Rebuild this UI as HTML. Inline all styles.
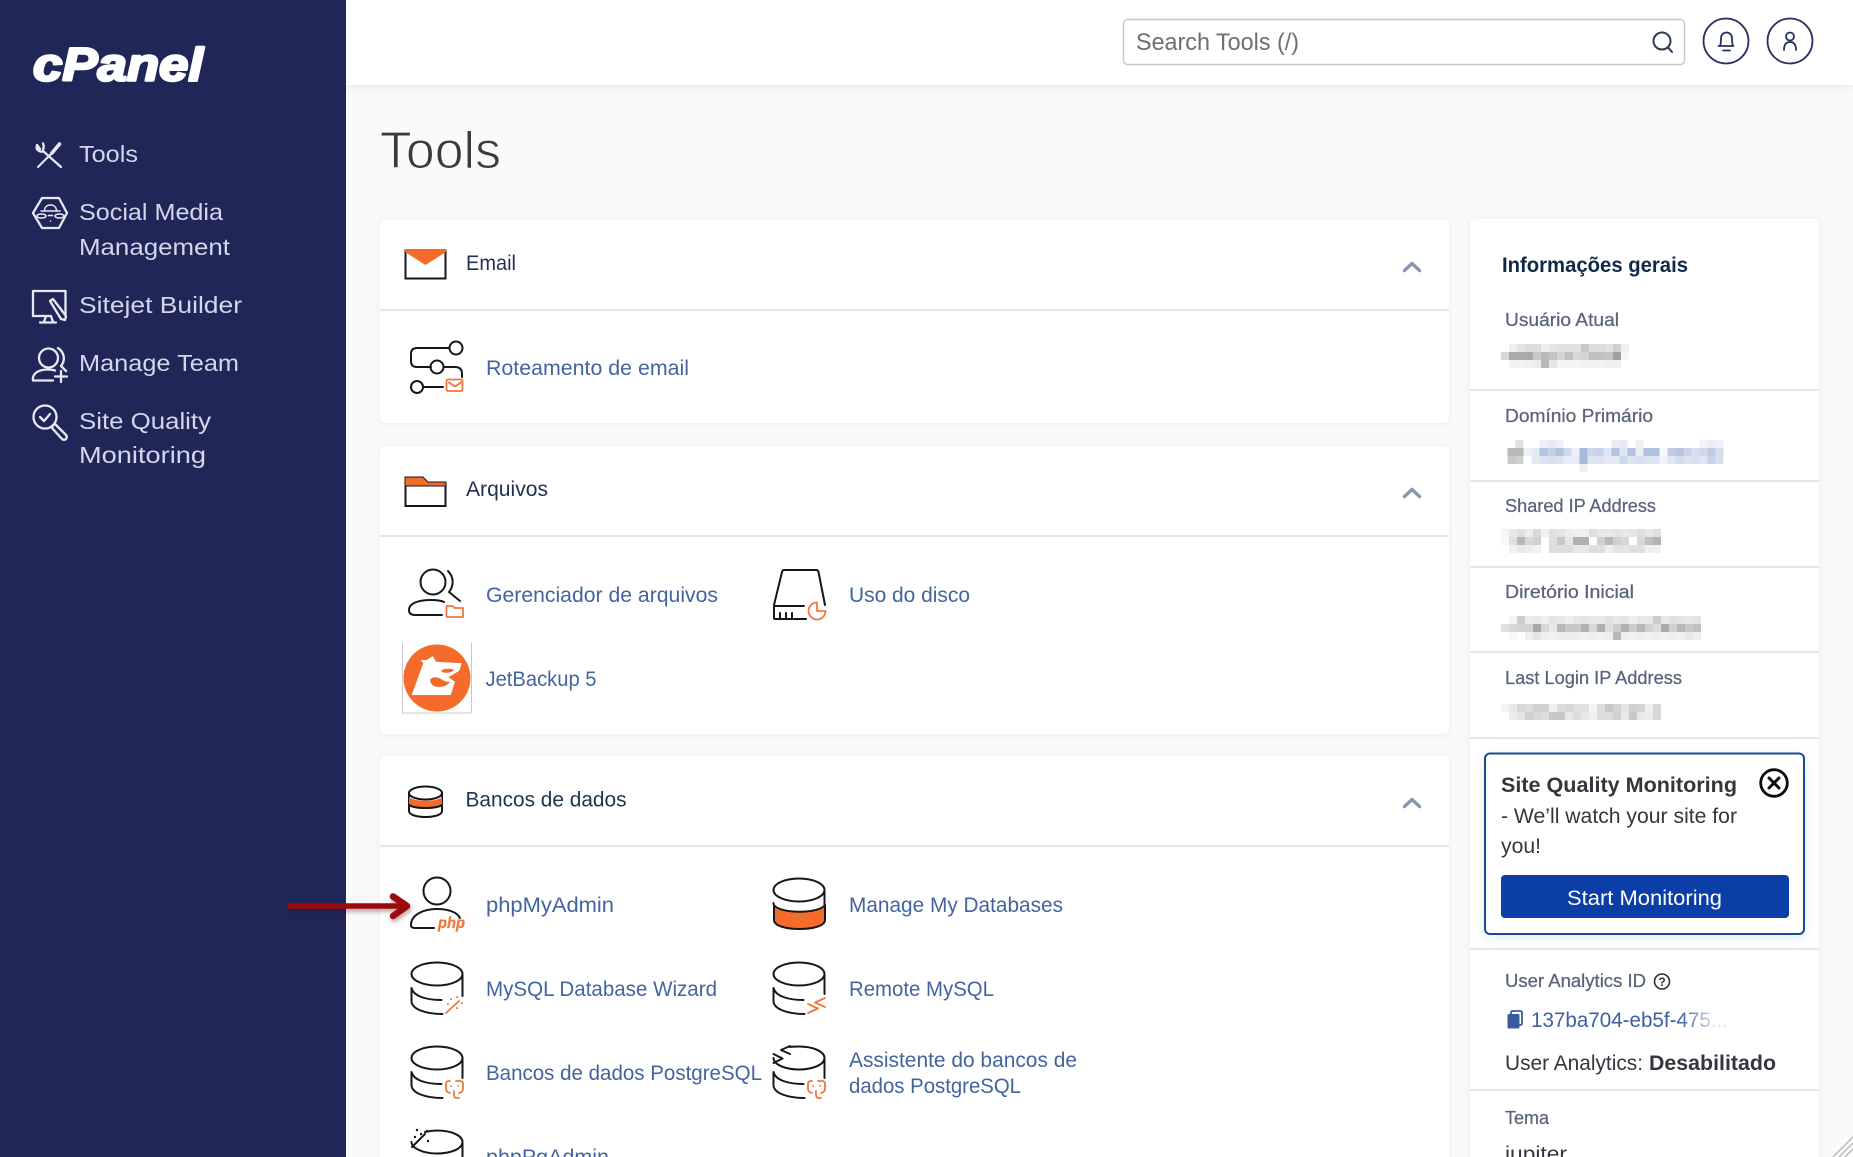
<!DOCTYPE html>
<html lang="pt"><head><meta charset="utf-8"><title>cPanel - Tools</title>
<style>
html,body{margin:0;padding:0;width:1853px;height:1157px;overflow:hidden;background:#fafafa}
svg{display:block}
text{font-family:"Liberation Sans",sans-serif;white-space:pre}
.nav{font-size:23.5px;fill:#d2d7ea}
.hd{font-size:21px;fill:#1f3350}
.lk{font-size:21px;fill:#44649f}
.lb{font-size:18px;fill:#59637a;stroke:#59637a;stroke-width:.25px}
.tx{font-size:21px;fill:#33373d}
.b{font-weight:700}
.i{fill:none;stroke:#e6e9f4;stroke-width:2.3;stroke-linecap:round;stroke-linejoin:round}
.k{fill:none;stroke:#15171c;stroke-width:2;stroke-linecap:round;stroke-linejoin:round}
.o{fill:none;stroke:#f0783c;stroke-width:1.8;stroke-linecap:round;stroke-linejoin:round}
.ch{fill:none;stroke:#8c96b0;stroke-width:3.5;stroke-linecap:round;stroke-linejoin:round}
.dv{fill:#e6e6ea}
.p rect{width:8px;height:8px}
.card{fill:#fff;filter:drop-shadow(0 1px 3px rgba(30,30,60,.07))}
</style></head><body>
<svg width="1853" height="1157" viewBox="0 0 1853 1157" xmlns="http://www.w3.org/2000/svg">
<defs><linearGradient id="fade" gradientUnits="userSpaceOnUse" x1="1680" y1="0" x2="1715" y2="0"><stop offset="0" stop-color="#3f60a0"/><stop offset="1" stop-color="#dfe5f0"/></linearGradient></defs>
<rect width="1853" height="1157" fill="#fafafa"/>

<!-- top bar -->
<rect x="346" y="0" width="1507" height="85" fill="#fff" style="filter:drop-shadow(0 2px 4px rgba(30,30,60,.08))"/>
<rect x="1123.500" y="19.500" width="561" height="45" rx="4" fill="#fff" stroke="#c6c8d2" stroke-width="1.500"/>
<text x="1136" y="50" font-size="24" fill="#6c6f75" textLength="163" lengthAdjust="spacingAndGlyphs">Search Tools (/)</text>
<g fill="none" stroke="#2a3a52" stroke-width="2" stroke-linecap="round"><circle cx="1662" cy="41" r="8.500"/><path d="M1668 47.500l4 4.500"/></g>
<g fill="none" stroke="#27315f" stroke-width="1.800" stroke-linecap="round" stroke-linejoin="round">
<circle cx="1726" cy="41" r="22.500"/><circle cx="1790" cy="41" r="22.500"/>
<path d="M1720 46c1-2 1-4 1-8a5.500 5.500 0 0 1 11 0c0 4 0 6 1 8zM1718.500 46h15M1723 50.500h7"/>
<circle cx="1790" cy="36.500" r="4"/><path d="M1784 50c0-6 2.500-8 6-8s6 2 6 8"/>
</g>

<!-- heading -->
<text x="380" y="168" font-size="52" fill="#3a3a3e" stroke="#fafafa" stroke-width="1.100" textLength="121" lengthAdjust="spacingAndGlyphs">Tools</text>

<!-- email card -->
<rect class="card" x="380" y="220" width="1069" height="203" rx="5"/>
<rect class="dv" x="380" y="309" width="1069" height="2"/>
<path d="M405.500 250.500h40v28h-40z" fill="#fff" stroke="#15171c" stroke-width="2"/>
<path d="M405 250h41v2l-20.500 13-20.500-13z" fill="#f36c2c"/>
<text class="hd" x="466" y="270" textLength="50" lengthAdjust="spacingAndGlyphs">Email</text>
<path class="ch" d="M1404.500 270.500l7.500-7 7.500 7"/>
<g class="k"><circle cx="456" cy="348" r="6.500"/><path d="M449 348h-32q-6 0-6 6v7q0 6 6 6h14"/><circle cx="437" cy="367" r="6.500"/><path d="M444 367h11q7 0 7 7v3"/><circle cx="417" cy="387" r="6"/><path d="M423 387h20"/></g>
<g class="o"><rect x="446.500" y="379.500" width="16" height="11.500" rx="1.500"/><path d="M449 382.500l6 4 6-4"/></g>
<text class="lk" x="486" y="375" textLength="203" lengthAdjust="spacingAndGlyphs">Roteamento de email</text>

<!-- files card -->
<rect class="card" x="380" y="446" width="1069" height="288" rx="5"/>
<rect class="dv" x="380" y="535" width="1069" height="2"/>
<path d="M405.500 484h40v22h-40z" fill="#fff" stroke="#15171c" stroke-width="2"/>
<path d="M405 477h18l5 5h18v4h-41z" fill="#f36c2c" stroke="#15171c" stroke-width="1"/>
<text class="hd" x="466" y="496" textLength="82" lengthAdjust="spacingAndGlyphs">Arquivos</text>
<path class="ch" d="M1404.500 496.500l7.500-7 7.500 7"/>
<g class="k" stroke-width="1.800"><circle cx="433" cy="582" r="12.500"/><path d="M442 615h-27q-6 0-6-5c0-7 10-10 22-10q9 0 13 2M448 571c6 6 6 15 1 21l11 9"/></g>
<g class="o"><path d="M446.500 606h6l2 2h8.500v9h-16.500z"/></g>
<text class="lk" x="486" y="602" textLength="232" lengthAdjust="spacingAndGlyphs">Gerenciador de arquivos</text>
<g class="k"><path d="M774 605l8-33q.500-2 2-2h32q2 0 2.500 2l6.500 33"/><path d="M804 606h-30v12q0 1 1 1h31M780 613v5M786 613v5M792 613v5"/></g>
<g class="o"><path d="M817 602.500a8.500 8.500 0 1 0 8.500 8.500h-8.500z"/></g>
<text class="lk" x="849" y="602" textLength="121" lengthAdjust="spacingAndGlyphs">Uso do disco</text>
<path d="M402.500 643v70h69v-70" fill="#fff" stroke="#c8c8c8"/>
<circle cx="437" cy="678" r="33.500" fill="#f46b2c"/>
<path d="M411.700 695l11.600-31.700-2.600-3.300h6l6-4 3.300 5.700 25.700 1.600-2.400 7.400-11 6.600 6.700 4.400-4.300 13.300z" fill="#fff"/>
<path d="M441 671c2-3 10-3 13-1-2 3-10 4-13 1z" fill="#f46b2c"/>
<path d="M430 680c2-4 8-3 11-1 3 2 6 3 9 3-4 6-19 8-20-2z" fill="#f46b2c"/>
<text class="lk" x="485.500" y="686" textLength="111" lengthAdjust="spacingAndGlyphs">JetBackup 5</text>

<!-- db card -->
<rect class="card" x="380" y="756" width="1069" height="420" rx="5"/>
<rect class="dv" x="380" y="845" width="1069" height="2"/>
<path d="M409 793v18c0 8 33 8 33 0v-18z" fill="#fff" stroke="#15171c" stroke-width="2"/>
<ellipse cx="425.500" cy="793" rx="16.500" ry="6.500" fill="#fff" stroke="#15171c" stroke-width="2"/>
<path d="M409 797c5 5 28 5 33 0v8c-6 4-27 4-33 0z" fill="#f36c2c"/>
<path class="k" d="M409 805c6 4 27 4 33 0" stroke-width="1.500"/>
<text class="hd" x="465.500" y="806.500" textLength="161" lengthAdjust="spacingAndGlyphs">Bancos de dados</text>
<path class="ch" d="M1404.500 806.500l7.500-7 7.500 7"/>

<!-- phpMyAdmin -->
<g class="k" stroke-width="1.800"><circle cx="437" cy="891" r="13.500"/><path d="M434 928h-19q-4 0-4-3c0-10 12-16 26-16 11 0 20 3 23 9"/></g>
<text x="438" y="928" font-size="15.500" font-weight="700" font-style="italic" fill="#f0783c" stroke="#f0783c" stroke-width=".3" textLength="27" lengthAdjust="spacingAndGlyphs">php</text>
<text class="lk" x="486" y="912" textLength="128" lengthAdjust="spacingAndGlyphs">phpMyAdmin</text>
<!-- manage -->
<path d="M774 905v15c0 12 51 12 51 0v-15c-6 9-45 9-51 0z" fill="#f36c2c" stroke="#15171c" stroke-width="2" stroke-linejoin="round"/>
<g class="k"><ellipse cx="799" cy="890" rx="25.500" ry="11.500"/><path d="M824.500 890v16M773.500 890v0M773.500 904v-1"/></g>
<text class="lk" x="849" y="912" textLength="214" lengthAdjust="spacingAndGlyphs">Manage My Databases</text>
<!-- wizard -->
<g class="k"><ellipse cx="437" cy="974" rx="25.500" ry="11.500"/><path d="M462.500 974v22M411.500 988v13c0 8 14 13 31 13M411.500 988c2 8 14 12 30 12"/></g>
<g class="o"><path d="M446 1013l13-12"/><path d="M451 999v.1M457 997v.1M462 1003v.1M457 1008v.1M448 1004v.1" stroke-width="2"/></g>
<text class="lk" x="486" y="996" textLength="231" lengthAdjust="spacingAndGlyphs">MySQL Database Wizard</text>
<!-- remote -->
<g class="k"><ellipse cx="799" cy="974" rx="25.500" ry="11.500"/><path d="M824.500 974v20M773.500 988v13c0 8 14 13 31 13M773.500 988c2 8 14 12 30 12"/></g>
<g class="o"><path d="M808 1004l10 4.500-10 4.500M825 998l-10 4.500 10 4.500"/></g>
<text class="lk" x="849" y="996" textLength="145" lengthAdjust="spacingAndGlyphs">Remote MySQL</text>
<!-- postgres -->
<g class="k"><ellipse cx="437" cy="1058" rx="25.500" ry="11.500"/><path d="M462.500 1058v20M411.500 1072v13c0 8 14 13 31 13M411.500 1072c2 8 14 12 30 12"/></g>
<g class="o"><path d="M450 1081h-1q-3 0-3 3v5q0 3 4 4M456 1081h4q3 0 3 3v5q0 3-4 4M454 1091v4q0 3 3 3h2M451 1086v.1M458 1086v.1"/></g>
<text class="lk" x="486" y="1080" textLength="276" lengthAdjust="spacingAndGlyphs">Bancos de dados PostgreSQL</text>
<!-- assistente -->
<g class="k"><path d="M790 1047c3-.500 6-.500 9-.500 14 0 25.500 5 25.500 11.500s-11.500 11.500-25.500 11.500-25.500-5-25.500-11.500M824.500 1058v20M773.500 1072v13c0 8 14 13 31 13M773.500 1072c2 8 14 12 30 12M790 1046l-9 4 9 4M773.500 1054l9 4.500-9 4.500"/></g>
<g class="o"><path d="M812 1081h-1q-3 0-3 3v5q0 3 4 4M818 1081h4q3 0 3 3v5q0 3-4 4M816 1091v4q0 3 3 3h2M813 1086v.1M820 1086v.1"/></g>
<text class="lk" x="849" y="1067" textLength="228" lengthAdjust="spacingAndGlyphs">Assistente do bancos de</text>
<text class="lk" x="849" y="1093" textLength="172" lengthAdjust="spacingAndGlyphs">dados PostgreSQL</text>
<!-- phppgadmin -->
<g class="k"><path d="M425 1132c4-1 8-1.500 12-1.500 14 0 25.500 5 25.500 11.500v15"/><path d="M411.500 1142c0 6 11 11.500 25.500 11.500s25.500-5 25.500-11.500"/><path d="M412 1147l13-13" /><path d="M417 1130v.1M421 1134v.1M427 1131v.1M415 1137v.1M428 1141v.1" stroke-width="2.400"/></g>
<text class="lk" x="486" y="1164" textLength="123" lengthAdjust="spacingAndGlyphs">phpPgAdmin</text>

<!-- info panel -->
<rect class="card" x="1470" y="219" width="349" height="960" rx="4"/>
<rect class="dv" x="1470" y="389" width="349" height="2"/>
<rect class="dv" x="1470" y="480" width="349" height="2"/>
<rect class="dv" x="1470" y="566" width="349" height="2"/>
<rect class="dv" x="1470" y="651" width="349" height="2"/>
<rect class="dv" x="1470" y="737" width="349" height="2"/>
<rect class="dv" x="1470" y="948" width="349" height="2"/>
<rect class="dv" x="1470" y="1089" width="349" height="2"/>
<text x="1502" y="272" font-size="21" font-weight="700" fill="#10294a" textLength="186" lengthAdjust="spacingAndGlyphs">Informações gerais</text>
<text class="lb" x="1505" y="326" textLength="114" lengthAdjust="spacingAndGlyphs">Usuário Atual</text>
<text class="lb" x="1505" y="422" textLength="148" lengthAdjust="spacingAndGlyphs">Domínio Primário</text>
<text class="lb" x="1505" y="512" textLength="151" lengthAdjust="spacingAndGlyphs">Shared IP Address</text>
<text class="lb" x="1505" y="598" textLength="129" lengthAdjust="spacingAndGlyphs">Diretório Inicial</text>
<text class="lb" x="1505" y="684" textLength="177" lengthAdjust="spacingAndGlyphs">Last Login IP Address</text>

<g class="p">
<g transform="translate(1501,344)"><rect x="8" fill="#eee"/><rect x="16" fill="#e4e4e4"/><rect x="24" fill="#ddd"/><rect x="32" fill="#ddd"/><rect x="40" fill="#eee"/><rect x="48" fill="#e6e6e6"/><rect x="56" fill="#e2e2e2"/><rect x="64" fill="#e2e2e2"/><rect x="72" fill="#e2e2e2"/><rect x="80" fill="#c8c8c8"/><rect x="88" fill="#ddd"/><rect x="96" fill="#ddd"/><rect x="104" fill="#e2e2e2"/><rect x="112" fill="#d0d0d0"/><rect x="120" fill="#f0f0f0"/></g>
<g transform="translate(1501,352)"><rect x="0" fill="#d8d8d8"/><rect x="8" fill="#aaa"/><rect x="16" fill="#aaa"/><rect x="24" fill="#aaa"/><rect x="32" fill="#c8c8c8"/><rect x="40" fill="#b8b8b8"/><rect x="48" fill="#c4c4c4"/><rect x="56" fill="#d4d4d4"/><rect x="64" fill="#c0c0c0"/><rect x="72" fill="#d8d8d8"/><rect x="80" fill="#d4d4d4"/><rect x="88" fill="#c0c0c0"/><rect x="96" fill="#c0c0c0"/><rect x="104" fill="#c4c4c4"/><rect x="112" fill="#a0a0a0"/><rect x="120" fill="#f4f4f4"/></g>
<g transform="translate(1501,360)"><rect x="8" fill="#f2f2f2"/><rect x="16" fill="#f2f2f2"/><rect x="24" fill="#f0f0f0"/><rect x="32" fill="#ececec"/><rect x="40" fill="#b8b8b8"/><rect x="48" fill="#e6e6e6"/><rect x="56" fill="#f4f4f4"/><rect x="64" fill="#f4f4f4"/><rect x="72" fill="#f4f4f4"/><rect x="80" fill="#f2f2f2"/><rect x="88" fill="#f2f2f2"/><rect x="96" fill="#f2f2f2"/><rect x="104" fill="#f0f0f0"/><rect x="112" fill="#f0f0f0"/></g>

<g transform="translate(1507.500,440)"><rect x="8" fill="#e0e0e0"/><rect x="32" fill="#eef1f8"/><rect x="40" fill="#e4e9f4"/><rect x="48" fill="#eef1f8"/><rect x="104" fill="#e8edf6"/><rect x="112" fill="#e4e9f4"/><rect x="128" fill="#eef1f8"/><rect x="192" fill="#f0f3f8"/><rect x="200" fill="#e8edf6"/><rect x="208" fill="#eef1f8"/></g>
<g transform="translate(1507.500,448)"><rect x="0" fill="#b8b8b8"/><rect x="8" fill="#b8b8b8"/><rect x="16" fill="#eef1f8"/><rect x="24" fill="#e4eaf4"/><rect x="32" fill="#b4c3e0"/><rect x="40" fill="#c4d0e6"/><rect x="48" fill="#b4c3e0"/><rect x="56" fill="#d0daec"/><rect x="64" fill="#eef1f8"/><rect x="72" fill="#a8badb"/><rect x="80" fill="#ccd6ea"/><rect x="88" fill="#c8d3e8"/><rect x="96" fill="#dde4f1"/><rect x="104" fill="#b4c3e0"/><rect x="112" fill="#dde4f1"/><rect x="120" fill="#b4c3e0"/><rect x="128" fill="#e8edf6"/><rect x="136" fill="#b0c0df"/><rect x="144" fill="#b0c0df"/><rect x="152" fill="#f4f6fa"/><rect x="160" fill="#c0cce4"/><rect x="168" fill="#b8c6e2"/><rect x="176" fill="#c8d3e8"/><rect x="184" fill="#d8e0f0"/><rect x="192" fill="#d0d9ec"/><rect x="200" fill="#c0cce4"/><rect x="208" fill="#d4dcee"/></g>
<g transform="translate(1507.500,456)"><rect x="0" fill="#c8c8c8"/><rect x="8" fill="#d0d0d0"/><rect x="24" fill="#e4eaf4"/><rect x="32" fill="#dde4f1"/><rect x="40" fill="#d8e0f0"/><rect x="48" fill="#dde4f1"/><rect x="56" fill="#e8edf6"/><rect x="64" fill="#e8edf6"/><rect x="72" fill="#a8badb"/><rect x="80" fill="#dde4f1"/><rect x="88" fill="#dde4f1"/><rect x="96" fill="#e4e9f4"/><rect x="104" fill="#e4e9f4"/><rect x="112" fill="#d0d9ec"/><rect x="120" fill="#dde4f1"/><rect x="128" fill="#d8e0f0"/><rect x="136" fill="#dde4f1"/><rect x="144" fill="#dde4f1"/><rect x="152" fill="#f0f3f8"/><rect x="160" fill="#e0e6f2"/><rect x="168" fill="#d4dcee"/><rect x="176" fill="#dde4f1"/><rect x="184" fill="#d8e0f0"/><rect x="192" fill="#e0e6f2"/><rect x="200" fill="#c8d3e8"/><rect x="208" fill="#d8e0f0"/></g>
<g transform="translate(1507.500,464)"><rect x="72" fill="#eef1f8"/></g>

<g transform="translate(1501,529)"><rect x="0" fill="#f6f6f6"/><rect x="8" fill="#e8e8e8"/><rect x="16" fill="#e0e0e0"/><rect x="24" fill="#ececec"/><rect x="32" fill="#d8d8d8"/><rect x="40" fill="#f0f0f0"/><rect x="48" fill="#e0e0e0"/><rect x="56" fill="#e4e4e4"/><rect x="64" fill="#ececec"/><rect x="72" fill="#f0f0f0"/><rect x="80" fill="#f0f0f0"/><rect x="88" fill="#ddd"/><rect x="96" fill="#e8e8e8"/><rect x="104" fill="#e8e8e8"/><rect x="112" fill="#e4e4e4"/><rect x="120" fill="#e8e8e8"/><rect x="128" fill="#e4e4e4"/><rect x="136" fill="#ddd"/><rect x="144" fill="#e8e8e8"/><rect x="152" fill="#e0e0e0"/></g>
<g transform="translate(1501,537)"><rect x="0" fill="#f8f8f8"/><rect x="8" fill="#e0e0e0"/><rect x="16" fill="#b8b8b8"/><rect x="24" fill="#d8d8d8"/><rect x="32" fill="#d0d0d0"/><rect x="48" fill="#ddd"/><rect x="56" fill="#c8c8c8"/><rect x="64" fill="#e8e8e8"/><rect x="72" fill="#b0b0b0"/><rect x="80" fill="#b0b0b0"/><rect x="96" fill="#d0d0d0"/><rect x="104" fill="#b8b8b8"/><rect x="112" fill="#d0d0d0"/><rect x="120" fill="#d8d8d8"/><rect x="136" fill="#d8d8d8"/><rect x="144" fill="#c0c0c0"/><rect x="152" fill="#b4b4b4"/></g>
<g transform="translate(1501,545)"><rect x="8" fill="#f0f0f0"/><rect x="16" fill="#e8e8e8"/><rect x="24" fill="#ececec"/><rect x="32" fill="#f2f2f2"/><rect x="48" fill="#ddd"/><rect x="56" fill="#ddd"/><rect x="64" fill="#ddd"/><rect x="72" fill="#e8e8e8"/><rect x="80" fill="#e8e8e8"/><rect x="88" fill="#ddd"/><rect x="96" fill="#e0e0e0"/><rect x="104" fill="#f0f0f0"/><rect x="112" fill="#e4e4e4"/><rect x="120" fill="#e4e4e4"/><rect x="128" fill="#e0e0e0"/><rect x="136" fill="#e0e0e0"/><rect x="144" fill="#f0f0f0"/><rect x="152" fill="#f0f0f0"/></g>

<g transform="translate(1501,616)"><rect x="8" fill="#f4f4f4"/><rect x="16" fill="#ccc"/><rect x="24" fill="#ececec"/><rect x="32" fill="#e8e8e8"/><rect x="40" fill="#eee"/><rect x="48" fill="#e4e4e4"/><rect x="56" fill="#e8e8e8"/><rect x="64" fill="#eee"/><rect x="72" fill="#e8e8e8"/><rect x="80" fill="#e4e4e4"/><rect x="88" fill="#e8e8e8"/><rect x="96" fill="#e8e8e8"/><rect x="104" fill="#e0e0e0"/><rect x="112" fill="#e8e8e8"/><rect x="120" fill="#e4e4e4"/><rect x="128" fill="#eee"/><rect x="136" fill="#e8e8e8"/><rect x="144" fill="#e8e8e8"/><rect x="152" fill="#ccc"/><rect x="160" fill="#e8e8e8"/><rect x="168" fill="#e0e0e0"/><rect x="176" fill="#e4e4e4"/><rect x="184" fill="#e8e8e8"/><rect x="192" fill="#e4e4e4"/></g>
<g transform="translate(1501,624)"><rect x="0" fill="#e0e0e0"/><rect x="8" fill="#d8d8d8"/><rect x="16" fill="#d4d4d4"/><rect x="24" fill="#d4d4d4"/><rect x="32" fill="#a8a8a8"/><rect x="40" fill="#d8d8d8"/><rect x="48" fill="#e8e8e8"/><rect x="56" fill="#b8b8b8"/><rect x="64" fill="#c8c8c8"/><rect x="72" fill="#c8c8c8"/><rect x="80" fill="#b0b0b0"/><rect x="88" fill="#d8d8d8"/><rect x="96" fill="#b0b0b0"/><rect x="104" fill="#ddd"/><rect x="112" fill="#ccc"/><rect x="120" fill="#b0b0b0"/><rect x="128" fill="#ccc"/><rect x="136" fill="#b8b8b8"/><rect x="144" fill="#d0d0d0"/><rect x="152" fill="#ddd"/><rect x="160" fill="#aaa"/><rect x="168" fill="#d0d0d0"/><rect x="176" fill="#b8b8b8"/><rect x="184" fill="#c8c8c8"/><rect x="192" fill="#c0c0c0"/></g>
<g transform="translate(1501,632)"><rect x="8" fill="#f8f8f8"/><rect x="24" fill="#f0f0f0"/><rect x="32" fill="#e4e4e4"/><rect x="40" fill="#eee"/><rect x="48" fill="#f0f0f0"/><rect x="56" fill="#eee"/><rect x="64" fill="#eee"/><rect x="72" fill="#eee"/><rect x="80" fill="#f0f0f0"/><rect x="88" fill="#eee"/><rect x="96" fill="#f0f0f0"/><rect x="104" fill="#eee"/><rect x="112" fill="#b8b8b8"/><rect x="120" fill="#eee"/><rect x="128" fill="#f0f0f0"/><rect x="136" fill="#eee"/><rect x="144" fill="#f0f0f0"/><rect x="152" fill="#eee"/><rect x="160" fill="#f0f0f0"/><rect x="168" fill="#eee"/><rect x="176" fill="#f0f0f0"/><rect x="184" fill="#e8e8e8"/><rect x="192" fill="#eee"/></g>

<g transform="translate(1501,704)"><rect x="0" fill="#f4f4f4"/><rect x="8" fill="#e8e8e8"/><rect x="16" fill="#d8d8d8"/><rect x="24" fill="#ddd"/><rect x="32" fill="#d0d0d0"/><rect x="40" fill="#d0d0d0"/><rect x="48" fill="#f0f0f0"/><rect x="56" fill="#ddd"/><rect x="64" fill="#d8d8d8"/><rect x="72" fill="#e0e0e0"/><rect x="80" fill="#e0e0e0"/><rect x="88" fill="#f4f4f4"/><rect x="96" fill="#ddd"/><rect x="104" fill="#c8c8c8"/><rect x="112" fill="#d4d4d4"/><rect x="120" fill="#e4e4e4"/><rect x="128" fill="#d0d0d0"/><rect x="136" fill="#d4d4d4"/><rect x="144" fill="#f0f0f0"/><rect x="152" fill="#d8d8d8"/></g>
<g transform="translate(1501,712)"><rect x="8" fill="#ececec"/><rect x="16" fill="#e4e4e4"/><rect x="24" fill="#d0d0d0"/><rect x="32" fill="#d8d8d8"/><rect x="40" fill="#ddd"/><rect x="48" fill="#c8c8c8"/><rect x="56" fill="#c8c8c8"/><rect x="64" fill="#e8e8e8"/><rect x="72" fill="#ddd"/><rect x="80" fill="#e8e8e8"/><rect x="88" fill="#f0f0f0"/><rect x="96" fill="#ddd"/><rect x="104" fill="#ddd"/><rect x="112" fill="#d0d0d0"/><rect x="120" fill="#e8e8e8"/><rect x="128" fill="#c8c8c8"/><rect x="136" fill="#e8e8e8"/><rect x="144" fill="#ececec"/><rect x="152" fill="#d8d8d8"/></g>
</g>

<!-- promo box -->
<rect x="1485" y="753.500" width="319" height="180.500" rx="5" fill="#fff" stroke="#1a4a96" stroke-width="2" style="filter:drop-shadow(0 3px 6px rgba(30,50,100,.10))"/>
<text class="tx b" x="1501" y="792" textLength="236" lengthAdjust="spacingAndGlyphs">Site Quality Monitoring</text>
<text class="tx" x="1501" y="823" textLength="236" lengthAdjust="spacingAndGlyphs">- We’ll watch your site for</text>
<text class="tx" x="1501" y="853" textLength="40" lengthAdjust="spacingAndGlyphs">you!</text>
<circle cx="1774" cy="783" r="13.300" fill="none" stroke="#0b0b0d" stroke-width="2.800"/>
<path d="M1769 778l10 10M1779 778l-10 10" stroke="#0b0b0d" stroke-width="3" stroke-linecap="round"/>
<rect x="1501" y="875" width="288" height="43" rx="4" fill="#0b3ea6"/>
<text x="1567" y="905" font-size="21" fill="#fff" textLength="155" lengthAdjust="spacingAndGlyphs">Start Monitoring</text>

<!-- analytics -->
<text class="lb" x="1505" y="987" textLength="141" lengthAdjust="spacingAndGlyphs">User Analytics ID</text>
<circle cx="1662" cy="981.500" r="7.500" fill="none" stroke="#2a2f38" stroke-width="1.600"/>
<text x="1662" y="986" font-size="12" font-weight="700" fill="#2a2f38" text-anchor="middle">?</text>
<rect x="1511" y="1011" width="11" height="14" rx="1.500" fill="none" stroke="#3a5a9c" stroke-width="1.800"/>
<rect x="1507.500" y="1014" width="12" height="14.500" rx="1.500" fill="#3a5a9c"/>
<text x="1531" y="1027" font-size="21" fill="url(#fade)" textLength="197" lengthAdjust="spacingAndGlyphs">137ba704-eb5f-475...</text>
<text class="tx" x="1505" y="1070" textLength="138" lengthAdjust="spacingAndGlyphs">User Analytics:</text>
<text class="tx b" x="1649" y="1070" textLength="127" lengthAdjust="spacingAndGlyphs">Desabilitado</text>
<text class="lb" x="1505" y="1124" textLength="44" lengthAdjust="spacingAndGlyphs">Tema</text>
<text class="tx" x="1505" y="1161" textLength="62" lengthAdjust="spacingAndGlyphs">jupiter</text>

<!-- resize handle -->
<path d="M1833 1157l20-20M1839 1157l14-14M1845 1157l8-8" stroke="#b4b4b8" stroke-width="1.300" fill="none"/>

<!-- sidebar -->
<rect x="0" y="0" width="346" height="1157" fill="#202758"/>
<text x="33" y="80.500" font-size="46" font-weight="700" font-style="italic" fill="#fff" stroke="#fff" stroke-width="2.500" stroke-linejoin="round" textLength="170" lengthAdjust="spacingAndGlyphs">cPanel</text>

<g class="i">
<path d="M60 144.500l-7 8M51 154L38 167" stroke-width="2"/>
<path d="M59.500 144l-7.500 9" stroke-width="3.600"/>
<path d="M37 145c-1 3 0 5 2 6s3 1 4 0l18 16M37 145l3 4M43 143.500c1 2 1 4 0 6"/>
<path d="M33 213l9-15h17l8 15-8 15H42z"/>
<path d="M44.500 211c0-4 2.500-6 6-6s6 2 6 6M41 211h19M48.500 215.500h4M50.500 221v.1" stroke-width="1.500"/>
<ellipse cx="41.500" cy="216" rx="4.500" ry="2" stroke-width="1.500"/><ellipse cx="59.500" cy="216" rx="4.500" ry="2" stroke-width="1.500"/>
<path d="M65.500 314v-23H33v25h17M46 316l-2 6M51 316l2 6M40 322.500h16"/>
<path d="M50 301l3-2 13 17-1 4-4-1z"/>
<circle cx="48.500" cy="358" r="9.500"/>
<path d="M33 380.500c-1-6 4-11 15-11q4 0 7 1M33 380.500h20M58 348c6 4 8 12 3 18l5 5M61 371v11M55 376.500h12"/>
<circle cx="45" cy="417" r="11.500"/>
<path d="M40 417l4 4 6-7M53 425l2-1 11 11c1 1 1 3 0 4s-3 1-4 0L52 428z"/>
</g>
<text class="nav" x="79" y="162" textLength="59" lengthAdjust="spacingAndGlyphs">Tools</text>
<text class="nav" x="79" y="220" textLength="144" lengthAdjust="spacingAndGlyphs">Social Media</text>
<text class="nav" x="79" y="255" textLength="151" lengthAdjust="spacingAndGlyphs">Management</text>
<text class="nav" x="79" y="313" textLength="163" lengthAdjust="spacingAndGlyphs">Sitejet Builder</text>
<text class="nav" x="79" y="371" textLength="160" lengthAdjust="spacingAndGlyphs">Manage Team</text>
<text class="nav" x="79" y="429" textLength="132" lengthAdjust="spacingAndGlyphs">Site Quality</text>
<text class="nav" x="79" y="463" textLength="127" lengthAdjust="spacingAndGlyphs">Monitoring</text>

<!-- red arrow -->
<g fill="none" stroke="#9c0a0e" stroke-linecap="round" stroke-linejoin="round" style="filter:drop-shadow(1px 3px 2px rgba(60,0,0,.35))">
<path d="M290 906h115" stroke-width="5.500"/>
<path d="M393 896.500l14 9.500-14 10" stroke-width="6.500"/>
</g>
</svg>
</body></html>
